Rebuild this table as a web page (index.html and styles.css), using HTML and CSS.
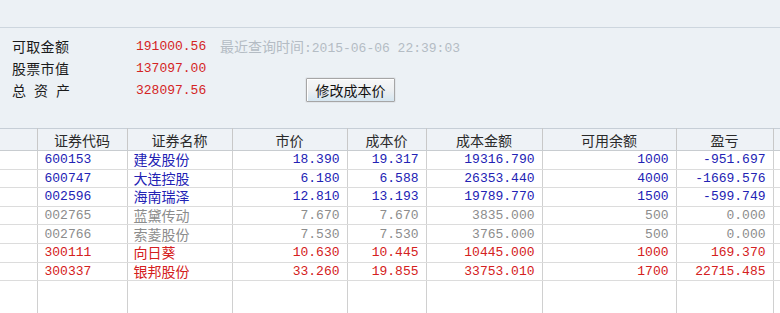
FILE: index.html
```html
<!DOCTYPE html>
<html lang="zh">
<head>
<meta charset="utf-8">
<link rel="stylesheet" href="styles.css">
</head>
<body>
<div class="toolbar"></div>
<div class="info">
  <div class="lbl">可取金额</div>
  <div class="val">191000.56</div>
  <div class="time"><span class="cjk">最近查询时间</span><span class="mono">:2015-06-06 22:39:03</span></div>
  <div class="lbl">股票市值</div>
  <div class="val">137097.00</div>
  <div></div>
  <div class="lbl spaced">总资产</div>
  <div class="val">328097.56</div>
  <div class="btncell"><button class="btn">修改成本价</button></div>
</div>
<table class="grid">
  <colgroup>
    <col class="c0"><col class="c1"><col class="c2"><col class="c3"><col class="c4"><col class="c5"><col class="c6"><col class="c7"><col class="c8">
  </colgroup>
  <thead>
    <tr><th></th><th>证券代码</th><th>证券名称</th><th>市价</th><th>成本价</th><th>成本金额</th><th>可用余额</th><th>盈亏</th><th></th></tr>
  </thead>
  <tbody>
    <tr class="blue"><td></td><td class="code">600153</td><td class="name">建发股份</td><td class="num">18.390</td><td class="num">19.317</td><td class="num">19316.790</td><td class="num">1000</td><td class="num">-951.697</td><td></td></tr>
    <tr class="blue"><td></td><td class="code">600747</td><td class="name">大连控股</td><td class="num">6.180</td><td class="num">6.588</td><td class="num">26353.440</td><td class="num">4000</td><td class="num">-1669.576</td><td></td></tr>
    <tr class="blue"><td></td><td class="code">002596</td><td class="name">海南瑞泽</td><td class="num">12.810</td><td class="num">13.193</td><td class="num">19789.770</td><td class="num">1500</td><td class="num">-599.749</td><td></td></tr>
    <tr class="gray"><td></td><td class="code">002765</td><td class="name">蓝黛传动</td><td class="num">7.670</td><td class="num">7.670</td><td class="num">3835.000</td><td class="num">500</td><td class="num">0.000</td><td></td></tr>
    <tr class="gray"><td></td><td class="code">002766</td><td class="name">索菱股份</td><td class="num">7.530</td><td class="num">7.530</td><td class="num">3765.000</td><td class="num">500</td><td class="num">0.000</td><td></td></tr>
    <tr class="red"><td></td><td class="code">300111</td><td class="name">向日葵</td><td class="num">10.630</td><td class="num">10.445</td><td class="num">10445.000</td><td class="num">1000</td><td class="num">169.370</td><td></td></tr>
    <tr class="red"><td></td><td class="code">300337</td><td class="name">银邦股份</td><td class="num">33.260</td><td class="num">19.855</td><td class="num">33753.010</td><td class="num">1700</td><td class="num">22715.485</td><td></td></tr>
    <tr class="filler"><td></td><td></td><td></td><td></td><td></td><td></td><td></td><td></td><td></td></tr>
  </tbody>
</table>
</body>
</html>
```

FILE: styles.css
```css
html, body {
  margin: 0;
  padding: 0;
  height: 313px;
  overflow: hidden;
}
body {
  background: #ecf1f5;
  font-family: "Noto Sans CJK SC", sans-serif;
  font-size: 14px;
  color: #1a1a1a;
}
.toolbar {
  height: 27px;
  border-bottom: 1px solid #cdd6de;
}
.info {
  display: grid;
  grid-template-columns: 124px 84px 1fr;
  grid-auto-rows: 22px;
  padding: 7px 0 0 12px;
  height: 93px;
  box-sizing: content-box;
  align-items: center;
}
.lbl {
  font-size: 14px;
  line-height: 22px;
  letter-spacing: 0.3px;
}
.lbl.spaced {
  letter-spacing: 8px;
}
.val {
  font-family: "Liberation Mono", monospace;
  font-size: 13px;
  color: #d42424;
}
.time {
  color: #b4bcc4;
  white-space: nowrap;
}
.time .cjk {
  font-size: 14px;
}
.mono {
  font-family: "Liberation Mono", monospace;
  font-size: 13px;
}
.btncell {
  position: relative;
  height: 22px;
}
.btn {
  position: absolute;
  left: 86px;
  top: -1px;
  width: 89px;
  height: 24px;
  padding: 0;
  font-family: "Noto Sans CJK SC", sans-serif;
  font-size: 14px;
  color: #111;
  background: linear-gradient(#f6f7f8 0%, #eef0f2 50%, #d6e6f0 100%);
  border: 1px solid #a6a6a6;
  box-shadow: inset 1px 1px 0 #ffffff, 0 0 0 1px #e2e6ea;
  border-radius: 1px;
}
.grid {
  border-collapse: collapse;
  table-layout: fixed;
  width: 780px;
  background: #ffffff;
}
.c0 { width: 37px; }
.c1 { width: 90px; }
.c2 { width: 105px; }
.c3 { width: 115px; }
.c4 { width: 79px; }
.c5 { width: 116px; }
.c6 { width: 134px; }
.c7 { width: 97px; }
.c8 { width: 7px; }
.grid th {
  height: 21px;
  padding: 0;
  font-weight: normal;
  font-size: 14px;
  color: #2a2a2a;
  background: #eef2f6;
  border-top: 1px solid #c6ced6;
  border-bottom: 1px solid #c8ccd0;
  border-right: 1px solid #c8c8c8;
  text-align: center;
  white-space: nowrap;
}
.grid td {
  height: 17.6px;
  padding: 0;
  border-bottom: 1px solid #dcdcdc;
  border-right: 1px solid #d0d0d0;
  white-space: nowrap;
  overflow: hidden;
  line-height: 17px;
}
.grid td.code {
  font-family: "Liberation Mono", monospace;
  font-size: 13px;
  padding-left: 7px;
}
.grid td.name {
  font-size: 14px;
  padding-left: 6px;
}
.grid td.num {
  font-family: "Liberation Mono", monospace;
  font-size: 13px;
  text-align: right;
  padding-right: 7px;
}
.grid tr.filler td {
  height: 33px;
  border-bottom: none;
}
.blue { color: #2222b4; }
.gray { color: #8c8c8c; }
.red { color: #d42020; }
```
